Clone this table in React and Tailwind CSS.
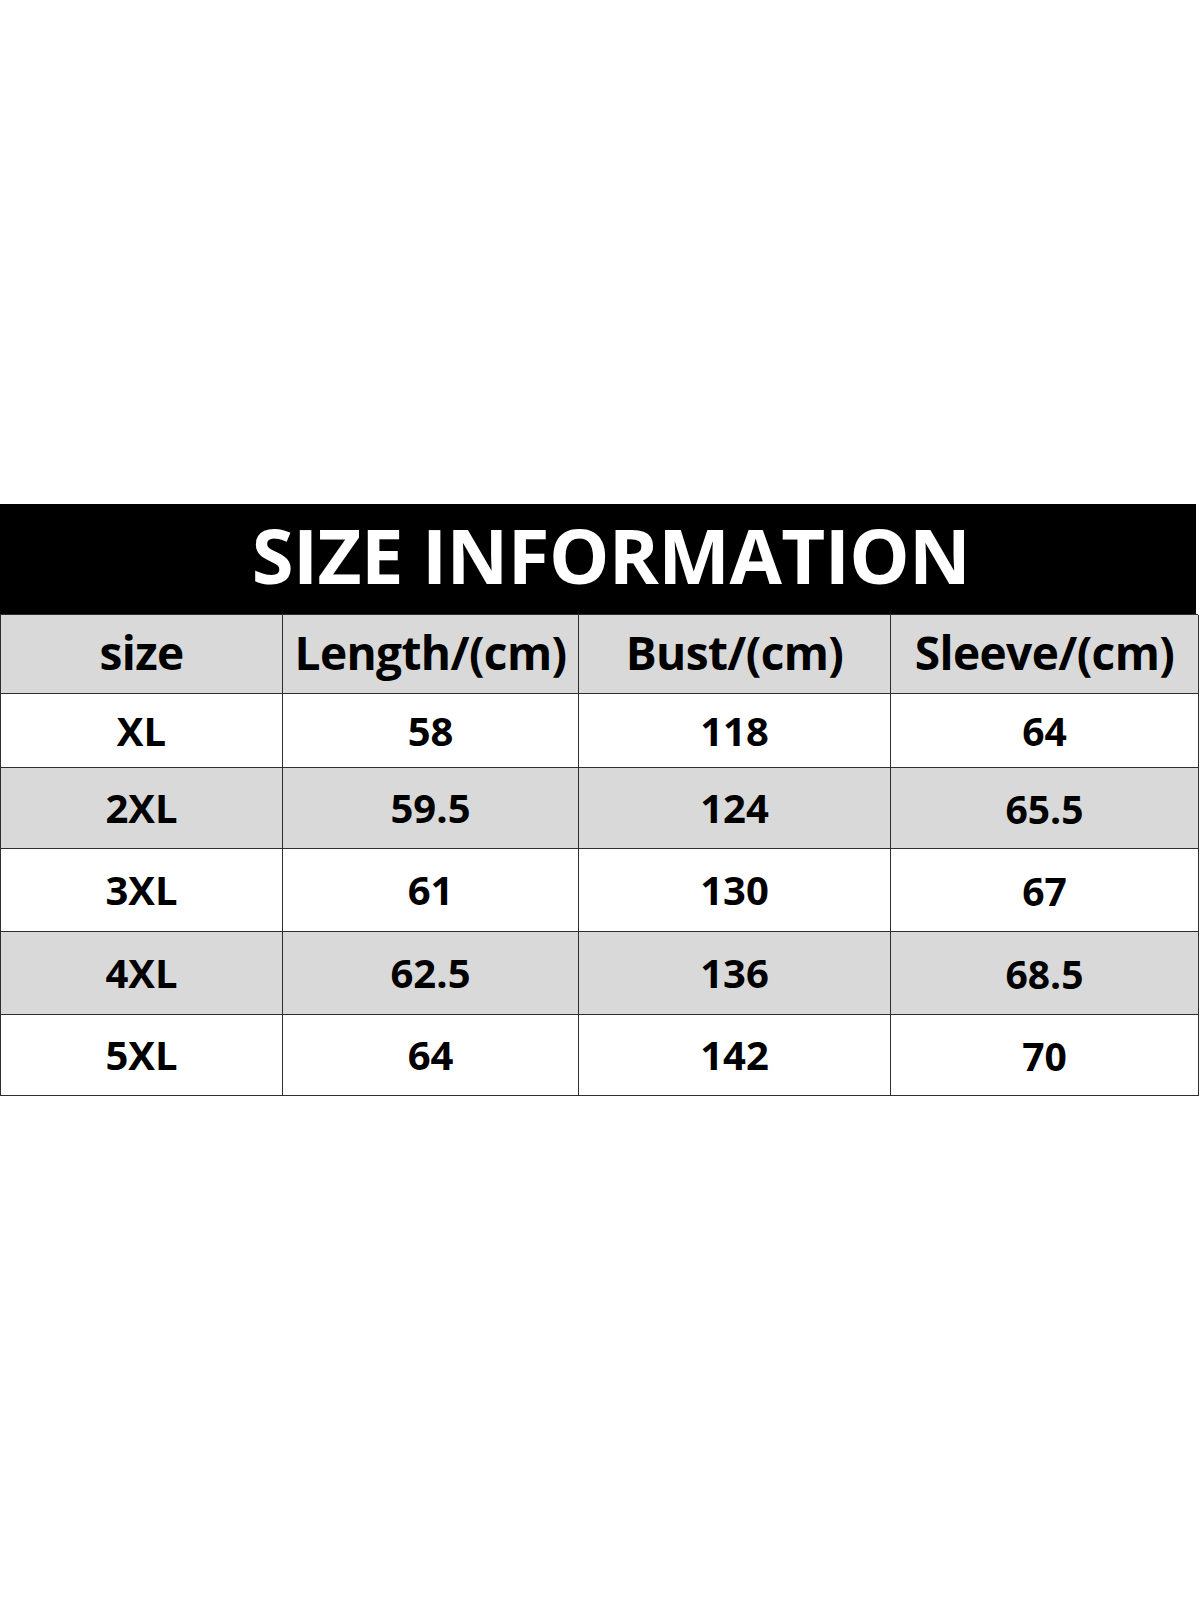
export default function App() {
  const rows = [
    { size: 'XL', length: '58', bust: '118', sleeve: '64', h: 'h-[74px]', gray: false },
    { size: '2XL', length: '59.5', bust: '124', sleeve: '65.5', h: 'h-[81px]', gray: true },
    { size: '3XL', length: '61', bust: '130', sleeve: '67', h: 'h-[83px]', gray: false },
    { size: '4XL', length: '62.5', bust: '136', sleeve: '68.5', h: 'h-[83px]', gray: true },
    { size: '5XL', length: '64', bust: '142', sleeve: '70', h: 'h-[81px]', gray: false },
  ];

  const cols = 'grid grid-cols-[282px_296px_312px_308px]';
  const cell = 'flex items-center justify-center border-r-[1.5px] border-b-[1.5px] border-[#2e2e2e] text-black font-bold';

  return (
    <div className="w-[1200px] h-[1600px] bg-white pt-[504px] font-['Open_Sans','Liberation_Sans',sans-serif]">
      <div className="w-[1196px] h-[111px] bg-black flex items-center justify-center">
        <h1 className="text-white text-[76px] font-bold leading-none tracking-[-0.6px] -mt-[10px] ml-[26px]">
          SIZE INFORMATION
        </h1>
      </div>

      <div className="w-[1198px] border-l-[1.5px] border-t-[1.5px] border-[#2e2e2e] -mt-[1px]">
        <div className={`${cols} h-[79px] bg-[#d9d9d9]`}>
          {['size', 'Length/(cm)', 'Bust/(cm)', 'Sleeve/(cm)'].map((t) => (
            <div key={t} className={`${cell} text-[46px] tracking-[-0.6px] leading-none pb-[4px]`}>
              {t}
            </div>
          ))}
        </div>

        {rows.map((r) => (
          <div key={r.size} className={`${cols} ${r.h} ${r.gray ? 'bg-[#d9d9d9]' : 'bg-white'}`}>
            <div className={`${cell} text-[40px] leading-none`}>{r.size}</div>
            <div className={`${cell} text-[40px] leading-none`}>{r.length}</div>
            <div className={`${cell} text-[40px] leading-none`}>{r.bust}</div>
            <div className={`${cell} text-[39px] leading-none`}>{r.sleeve}</div>
          </div>
        ))}
      </div>
    </div>
  );
}
